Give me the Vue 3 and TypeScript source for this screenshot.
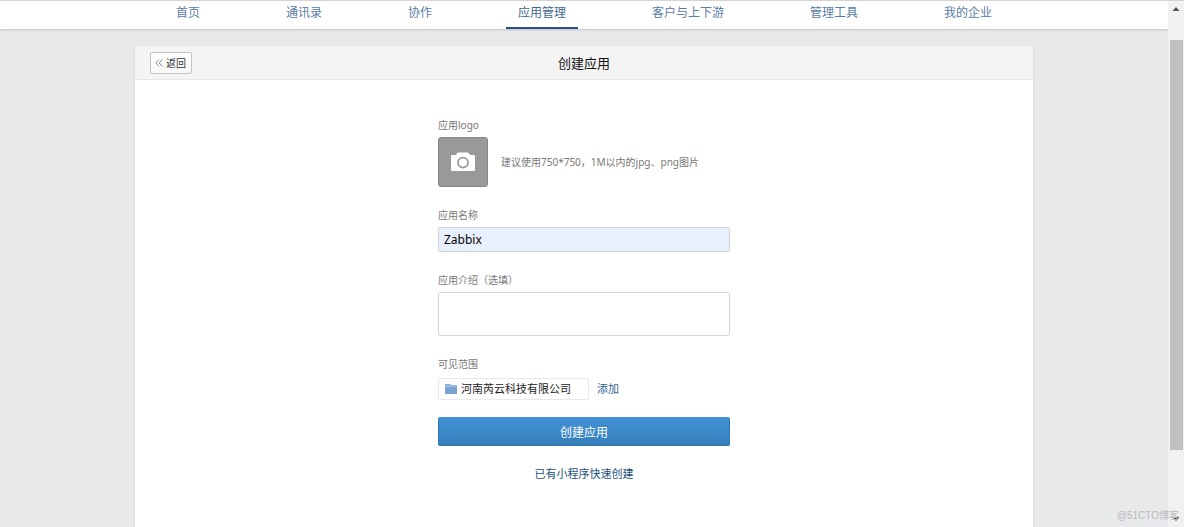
<script setup lang="ts">
import { ref } from 'vue'

interface NavItem {
  label: string
  active?: boolean
}

const navItems: NavItem[] = [
  { label: '首页' },
  { label: '通讯录' },
  { label: '协作' },
  { label: '应用管理', active: true },
  { label: '客户与上下游' },
  { label: '管理工具' },
  { label: '我的企业' },
]

const appName = ref('Zabbix')
const appIntro = ref('')
</script>

<template>
  <div class="window">
    <div class="page">
      <nav class="nav">
        <a
          v-for="item in navItems"
          :key="item.label"
          href="#"
          class="nav-item"
          :class="{ active: item.active }"
        >{{ item.label }}</a>
      </nav>

      <main class="card">
        <header class="card-head">
          <button type="button" class="back">
            <svg class="back-icon" width="8" height="8" viewBox="0 0 8 8" aria-hidden="true">
              <path d="M4 .5 .8 4 4 7.5M7.4 .5 4.2 4l3.2 3.5" fill="none" stroke="#8c8c8c" stroke-width="1" />
            </svg>
            返回
          </button>
          <h1 class="title">创建应用</h1>
        </header>

        <form class="form" @submit.prevent>
          <div class="field">
            <span id="logo-label" class="label">应用logo</span>
            <div class="logo-row">
              <button type="button" class="logo" aria-labelledby="logo-label">
                <svg width="24" height="20" viewBox="0 0 24 20" aria-hidden="true">
                  <path
                    d="M1.2 3H5l1.200-1.900Q6.600.5 7.400.5h9.200q.8 0 1.200.6L19 3h3.800Q24 3 24 4.200v13.600q0 1.200-1.200 1.200H1.200Q0 19 0 17.800V4.200Q0 3 1.200 3Z"
                    fill="#fff"
                  />
                  <circle cx="12" cy="10.600" r="5" fill="#fff" stroke="#999" stroke-width="1.800" />
                </svg>
              </button>
              <span class="hint">建议使用750*750，1M以内的jpg、png图片</span>
            </div>
          </div>

          <div class="field">
            <label class="label" for="app-name">应用名称</label>
            <input id="app-name" v-model="appName" class="text-input" type="text" />
          </div>

          <div class="field">
            <label class="label" for="app-intro">应用介绍（选填）</label>
            <textarea id="app-intro" v-model="appIntro" class="text-area"></textarea>
          </div>

          <div class="field scope-field">
            <span class="label">可见范围</span>
            <div class="scope-row">
              <div class="scope">
                <svg width="12" height="10" viewBox="0 0 12 10" aria-hidden="true">
                  <path d="M0 0h5l1 1h6v1.500H0Z" fill="#8fb3da" />
                  <path d="M0 2.500h12V10H0Z" fill="#7aa3d3" />
                </svg>
                河南芮云科技有限公司
              </div>
              <a href="#" class="link">添加</a>
            </div>
          </div>

          <button type="submit" class="submit">创建应用</button>
          <a href="#" class="link quick">已有小程序快速创建</a>
        </form>
      </main>
    </div>

    <div class="scrollbar" aria-hidden="true">
      <svg width="16" height="16" viewBox="0 0 16 16"><path d="m4.500 10 3.500-4 3.500 4Z" fill="#505050" /></svg>
      <div class="track"><div class="thumb"></div></div>
      <svg width="16" height="16" viewBox="0 0 16 16"><path d="m4.500 6 3.500 4 3.500-4Z" fill="#505050" /></svg>
    </div>
    <span class="watermark">@51CTO博客</span>
  </div>
</template>

<style>
body {
  margin: 0;
}
</style>

<style scoped>
.window {
  position: relative;
  display: flex;
  box-sizing: border-box;
  height: 100vh;
  overflow: hidden;
  border-top: 1px solid #d4d4d4;
  background: #e7e9eb;
  font-family: "Noto Sans", "Noto Sans CJK SC", sans-serif;
  font-size: 10px;
}
.window *,
.window *::before {
  box-sizing: border-box;
}
button,
input,
textarea {
  margin: 0;
  font-family: inherit;
}
a {
  text-decoration: none;
}
.page {
  display: flex;
  flex: 1;
  flex-direction: column;
  min-width: 0;
}
.nav {
  display: flex;
  flex: none;
  justify-content: center;
  gap: 62px;
  height: 28px;
  background: #fff;
  box-shadow: 0 1px 2px rgba(0, 0, 0, 0.16);
}
.nav-item {
  padding: 0 12px;
  border-bottom: 2px solid transparent;
  color: #5a7ca5;
  font-size: 12px;
  line-height: 24px;
  white-space: nowrap;
}
.nav-item.active {
  border-color: #2b5082;
  color: #3f6593;
}
.card {
  flex: 1;
  width: 77%;
  max-width: 898px;
  margin: 17px auto 0;
  border-radius: 3px 3px 0 0;
  background: #fff;
  box-shadow: 0 1px 2px rgba(0, 0, 0, 0.14);
}
.card-head {
  display: grid;
  grid-template-columns: 1fr auto 1fr;
  align-items: center;
  height: 34px;
  padding: 0 15px;
  border-bottom: 1px solid #e4e6e9;
  border-radius: 3px 3px 0 0;
  background: #f4f4f4;
}
.back {
  display: flex;
  align-items: center;
  justify-self: start;
  gap: 3px;
  height: 22px;
  padding: 0 5px 0 4px;
  border: 1px solid #c3c3c3;
  border-radius: 2px;
  background: linear-gradient(#fff, #f8f8f8);
  color: #333;
  font-size: 10px;
  white-space: nowrap;
}
.title {
  margin: 0;
  color: #111;
  font-size: 13px;
  font-weight: 400;
  line-height: 20px;
}
.form {
  display: flex;
  flex-direction: column;
  width: 292px;
  margin: 37px auto 0;
}
.field {
  display: flex;
  flex-direction: column;
  margin-bottom: 20px;
}
.label {
  margin-bottom: 4px;
  color: #787878;
  line-height: 16px;
}
.logo-row {
  display: flex;
  align-items: center;
  gap: 13px;
}
.logo {
  display: flex;
  flex: none;
  align-items: center;
  justify-content: center;
  width: 50px;
  height: 50px;
  padding: 0;
  border: 1px solid #878787;
  border-radius: 3px;
  background: #999;
}
.hint {
  color: #787878;
  line-height: 16px;
  white-space: nowrap;
}
.text-input {
  height: 25px;
  padding: 0 5px;
  border: 1px solid #cfd3da;
  border-radius: 2px;
  outline: 0;
  background: #e8f0fe;
  color: #000;
  font-size: 12px;
}
.text-area {
  height: 44px;
  padding: 4px 5px;
  border: 1px solid #d3d5d7;
  border-radius: 2px;
  outline: 0;
  background: #fff;
  font-size: 12px;
  resize: none;
}
.scope-field {
  margin-bottom: 17px;
}
.scope-field .label {
  margin-bottom: 6px;
}
.scope-row {
  display: flex;
  align-items: center;
  gap: 8px;
}
.scope {
  display: flex;
  align-items: center;
  gap: 4px;
  width: 151px;
  height: 22px;
  padding: 0 6px;
  border: 1px solid #e7eaec;
  border-radius: 2px;
  color: #222;
  font-size: 11px;
  line-height: 16px;
  white-space: nowrap;
}
.link {
  color: #2c5f8f;
  font-size: 11px;
  line-height: 16px;
}
.submit {
  height: 29px;
  padding: 0;
  border: 1px solid #2f79b9;
  border-top-color: #4a90d0;
  border-radius: 2px;
  background: linear-gradient(#4391d7, #3580ba);
  color: #fff;
  font-size: 12px;
}
.quick {
  align-self: center;
  margin-top: 20px;
  color: #234f7b;
}
.scrollbar {
  display: flex;
  flex: none;
  flex-direction: column;
  width: 16px;
  background: #f1f1f1;
}
.track {
  flex: 1;
  padding: 23px 1px 0 2px;
}
.thumb {
  height: 87%;
  background: #c1c1c1;
}
.watermark {
  position: absolute;
  right: 5px;
  bottom: 4px;
  color: #b9bbbd;
  font-family: "Liberation Sans", "Noto Sans CJK SC", sans-serif;
  line-height: 14px;
}
</style>
